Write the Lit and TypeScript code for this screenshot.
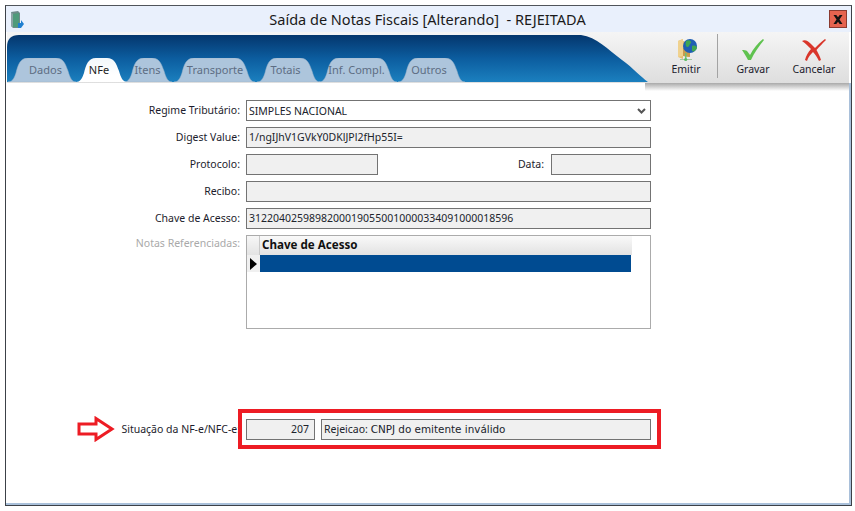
import { LitElement, html, css, svg } from "lit";
import { customElement } from "lit/decorators.js";

const tabs = [
  { label: "Dados", l: 8, r: 76, pad: 7 },
  { label: "NFe", l: 76, r: 127, pad: -5, active: true },
  { label: "Itens", l: 124, r: 172, pad: -1 },
  { label: "Transporte", l: 174, r: 255, pad: 1 },
  { label: "Totais", l: 257, r: 320, pad: -6 },
  { label: "Inf. Compl.", l: 319, r: 397, pad: -3 },
  { label: "Outros", l: 398, r: 465, pad: -5 },
];

function tabPath(w: number) {
  return `M0 24 C4 24 6 21 8 15 C10 7 12 0 20 0 L${w - 20} 0 C${w - 13} 0 ${w - 11} 5 ${w - 8} 13 C${w - 6} 20 ${w - 4} 24 ${w} 24 Z`;
}

@customElement("app-root")
export class AppRoot extends LitElement {
  static styles = css`
    :host { display: block; width: 855px; height: 511px; background: #fff; overflow: hidden;
      font-family: "Noto Sans", sans-serif; font-size: 10.5px; color: #1c1c2c; }
    * { box-sizing: border-box; }
    .window { margin: 5px 0 0 5px; width: 847px; height: 501px; border: 1px solid #3c4148; border-top-color: #50545a;
      display: flex; flex-direction: column; background: #fff; position: relative; }
    .titlebar { height: 26px; flex: none; background: #e9f0fc; display: flex; align-items: center; padding: 0 4px; position: relative; }
    .app-icon { flex: none; width: 14px; height: 18px; margin-top: 1px; }
    .title { flex: 1; text-align: center; font-size: 14.5px; color: #1a1a1a; white-space: pre; padding-left: 2px; margin-top: -1px; }
    .close { flex: none; width: 18px; height: 18px; background: #e5634f; border: 1px solid #8a3a30; display: flex; align-items: center; justify-content: center; }
    .close svg { display: block; }
    .header { flex: none; height: 51px; position: relative; background: linear-gradient(#f5f5f5, #ececec 40%, #dedede);
      margin: 0 2px 0 1px; display: flex; justify-content: space-between; }
    .blue { position: absolute; left: 0; top: 3px; width: 645px; height: 47px; display: block; }
    .shadow { position: absolute; left: 638px; right: 0; top: 51px; height: 8px; background: linear-gradient(#a9a9a9, #fff); }
    .tabs { position: relative; display: flex; align-items: flex-end; padding-bottom: 1px; }
    .tab { position: relative; height: 24px; flex: none; display: flex; align-items: center; justify-content: center;
      color: #5d6d83; font-size: 11px; padding-bottom: 2px; }
    .tab svg { position: absolute; inset: 0; display: block; }
    .tab span { position: relative; }
    .tab.active { color: #1f1f1f; z-index: 2; }
    .tools { position: relative; display: flex; align-items: flex-start; height: 46px; padding-right: 4px; }
    .tool { height: 46px; display: flex; flex-direction: column; align-items: center; padding-top: 6px; font-size: 10.5px; color: #20202c; }
    .tool svg { display: block; height: 24px; }
    .tool.emit { width: 56px; margin-right: 3px; }
    .tool.save { width: 60px; margin-left: 5px; }
    .tool.cancel { width: 62px; }
    .sep { width: 1px; height: 44px; margin-top: 2px; background: #a3a3a3; }
    .form { flex: 1; display: flex; flex-direction: column; gap: 6px; padding-top: 17px; border-right: 2px solid #a9c0da; border-bottom: 2px solid #a9c0da; }
    .row { display: flex; align-items: center; height: 21px; }
    .lbl { width: 234px; flex: none; text-align: right; white-space: nowrap; padding-bottom: 2px; }
    .lbl.off { color: #a9a9a9; }
    .row.top { align-items: flex-start; height: 94px; }
    .row.top .lbl { padding-top: 1px; }
    .f { height: 21px; margin-left: 6px; border: 1px solid #737373; background: #f0f0f0; display: flex; align-items: center;
      padding: 0 2px 2px; white-space: pre; color: #20242c; flex: none; }
    .w405 { width: 405px; }
    .white { background: #fff; justify-content: space-between; padding: 0 4px 0 2px; }
    .w132 { width: 132px; }
    .w100 { width: 100px; margin-left: 7px; }
    .data { width: 166px; flex: none; text-align: right; padding-bottom: 2px; }
    .w69 { width: 69px; justify-content: flex-end; padding-right: 5px; }
    .w330 { width: 330px; }
    .msg { font-family: "DejaVu Sans", sans-serif; font-size: 10.4px; }
    .grid { margin-left: 6px; width: 405px; height: 94px; border: 1px solid #ababab; background: #fff; flex: none; }
    .g-head { display: flex; height: 19px; width: 385px; }
    .g-ind { width: 13px; flex: none; background: linear-gradient(#f7f7f7, #e3e3e3); border-right: 1px solid #c9c9c9; }
    .g-col { flex: 1; background: linear-gradient(#f9f9f9, #e2e2e2); font-weight: 700; font-size: 11.6px; padding: 1px 0 0 2px; color: #111; }
    .g-row { display: flex; height: 17px; width: 384px; }
    .g-arrow { width: 13px; flex: none; background: #f0f0f0; display: flex; align-items: center; padding-left: 3px; }
    .g-sel { flex: 1; background: #004b91; }
    .status { margin-top: 84px; position: relative; }
    .mark { position: absolute; left: 232px; top: -10px; width: 423px; height: 40px; border: 4px solid #ed1c24; }
    .arrow { position: absolute; left: 71px; top: -3px; display: block; }
  `;

  private blue() {
    return svg`<defs><linearGradient id="bg" x1="0" y1="0" x2="0" y2="1">
      <stop offset="0" stop-color="#04366d"/><stop offset=".5" stop-color="#0c5d9f"/><stop offset="1" stop-color="#1b80bf"/></linearGradient></defs>
      <path d="M0 47 L0 12 C0 4 4 0 12 0 L574 0 C590 2 600 14 615 25 C626 33 634 42 641 47 Z" fill="url(#bg)"/>`;
  }

  render() {
    let prev = 7;
    return html`<div class="window">
      <div class="titlebar">
        <svg class="app-icon" viewBox="0 0 14 18">
          <path d="M1 1 L8 0 L10 2 L10 17 L3 17 L1 15 Z" fill="#6d8a88"/>
          <path d="M3 3 L9 2 L9 16 L3 16 Z" fill="#4f9a7a"/>
          <path d="M1 1 L3 3 L3 16 L1 15 Z" fill="#8ba3a5"/>
          <path d="M8 12 L11 12 L11 9 L14 13 L11 17 L8 17 Z" fill="#1f7fd0"/>
        </svg>
        <div class="title">Saída de Notas Fiscais [Alterando]  - REJEITADA</div>
        <div class="close"><svg width="12" height="9" viewBox="0 0 10 8"><path d="M1 0 L3.5 0 L5 2 L6.5 0 L9 0 L6.3 4 L9 8 L6.5 8 L5 6 L3.5 8 L1 8 L3.7 4 Z" fill="#111"/></svg></div>
      </div>
      <div class="header">
        <svg class="blue" viewBox="0 0 645 47">${this.blue()}</svg>
        <div class="shadow"></div>
        <div class="tabs">
          ${tabs.map((t) => {
            const w = t.r - t.l;
            const ml = t.l - prev;
            prev = t.r;
            const pad = t.pad > 0 ? `padding-left:${t.pad}px` : `padding-right:${-t.pad}px`;
            return html`<div class="tab ${t.active ? "active" : ""}" style="width:${w}px;margin-left:${ml}px;${pad}">
              <svg width=${w} height="24" viewBox="0 0 ${w} 24">
                <defs><linearGradient id="act" x1="0" y1="0" x2="0" y2="1"><stop offset="0" stop-color="#f2f7fb"/><stop offset=".7" stop-color="#fff"/></linearGradient></defs>
                <path d=${tabPath(w)} fill=${t.active ? "url(#act)" : "#adc5dc"} stroke=${t.active ? "none" : "#9db4cb"} stroke-width=".5"/>
              </svg>
              <span>${t.label}</span>
            </div>`;
          })}
        </div>
        <div class="tools">
          <div class="tool emit">
            <svg width="28" height="24" viewBox="0 0 28 24">
              <path d="M6 3 L11 1 L11 3 L17 5 L17 19 L11 18 L11 21 L6 19 Z" fill="#e8bf6e"/>
              <path d="M6 3 L11 1 L11 18 L6 19 Z" fill="#f0d28f"/>
              <path d="M11 18 L18 19 L18 12 L11 10 Z" fill="#c99c4d"/>
              <circle cx="18" cy="8" r="7" fill="#1f5fb4"/>
              <path d="M14 3 C17 1 20 3 19 5 C17 6 18 8 16 9 C14 9 13 7 14 3 Z M20 8 C23 7 25 8 25 10 C24 13 21 14 20 13 Z" fill="#3fa652"/>
              <rect x="13" y="15" width="1.5" height="6" fill="#6fbf73"/>
              <rect x="8" y="21" width="12" height="1" fill="#a5c9a5"/>
              <circle cx="13.7" cy="21.5" r="1.6" fill="#5dbb63"/>
            </svg>
            <span>Emitir</span>
          </div>
          <div class="sep"></div>
          <div class="tool save">
            <svg width="24" height="24" viewBox="0 0 24 24">
              <path d="M1 12 C3 12 5 12 6 13 L9 17 C12 11 17 5 22 1 L23 2 C18 8 13 15 10 22 L7 22 C5 18 3 15 1 12 Z" fill="#5fc24f"/>
            </svg>
            <span>Gravar</span>
          </div>
          <div class="tool cancel">
            <svg width="26" height="24" viewBox="0 0 26 24">
              <path d="M1 3 C4 1 7 3 10 6 L14 10 C17 7 20 4 24 1 L25 2 C21 6 18 9 15.5 12 C17 15 19 18 20 22 L18 23 C16 19 14 16 12 14 C10 16 7 19 6 23 L4 22 C5 18 7 14 10 11 C7 8 5 6 1 3 Z" fill="#d9362b"/>
            </svg>
            <span>Cancelar</span>
          </div>
        </div>
      </div>
      <div class="form">
        <div class="row"><div class="lbl">Regime Tributário:</div>
          <div class="f w405 white"><span>SIMPLES NACIONAL</span>
            <svg width="9" height="6" viewBox="0 0 9 6"><path d="M1 1 L4.5 4.5 L8 1" fill="none" stroke="#555" stroke-width="2"/></svg>
          </div></div>
        <div class="row"><div class="lbl">Digest Value:</div><div class="f w405">1/ngIJhV1GVkY0DKlJPl2fHp55I=</div></div>
        <div class="row"><div class="lbl">Protocolo:</div><div class="f w132"></div><div class="data">Data:</div><div class="f w100"></div></div>
        <div class="row"><div class="lbl">Recibo:</div><div class="f w405"></div></div>
        <div class="row"><div class="lbl">Chave de Acesso:</div><div class="f w405">31220402598982000190550010000334091000018596</div></div>
        <div class="row top"><div class="lbl off">Notas Referenciadas:</div>
          <div class="grid">
            <div class="g-head"><div class="g-ind"></div><div class="g-col">Chave de Acesso</div></div>
            <div class="g-row"><div class="g-arrow"><svg width="7" height="12" viewBox="0 0 7 12"><path d="M0 0 L7 6 L0 12 Z" fill="#000"/></svg></div><div class="g-sel"></div></div>
          </div></div>
        <div class="row status">
          <svg class="arrow" width="38" height="26" viewBox="0 0 38 26">
            <path d="M2 8 L19 8 L19 2.5 L35 13 L19 23.5 L19 18 L2 18 Z" fill="#fff" stroke="#ed1c24" stroke-width="3"/>
          </svg>
          <div class="lbl">Situação da NF-e/NFC-e:</div>
          <div class="f w69">207</div>
          <div class="f w330">Rejeicao: <span class="msg">CNPJ do emitente inválido</span></div>
          <div class="mark"></div>
        </div>
      </div>
    </div>`;
  }
}
